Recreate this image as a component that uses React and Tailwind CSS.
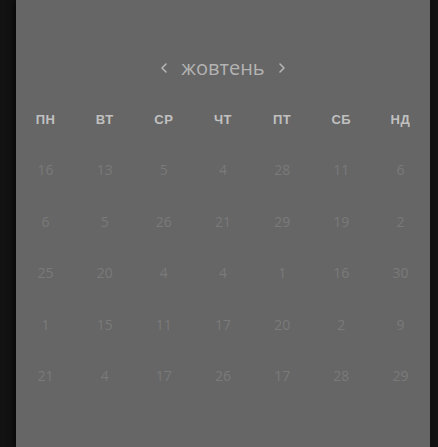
import React from 'react';

const days = ['пн', 'вт', 'ср', 'чт', 'пт', 'сб', 'нд'];

const weeks = [
  [16, 13, 5, 4, 28, 11, 6],
  [6, 5, 26, 21, 29, 19, 2],
  [25, 20, 4, 4, 1, 16, 30],
  [1, 15, 11, 17, 20, 2, 9],
  [21, 4, 17, 26, 17, 28, 29],
];

const Chevron = ({ dir }) => (
  <svg width="8" height="12" viewBox="0 0 8 12" className="text-[#b5b5b5]">
    <path
      d={dir === 'left' ? 'M6 2 L2 6 L6 10' : 'M2 2 L6 6 L2 10'}
      fill="none"
      stroke="currentColor"
      strokeWidth="1.6"
      strokeLinecap="round"
      strokeLinejoin="round"
    />
  </svg>
);

export default function App() {
  return (
    <div className="w-[438px] h-[447px] bg-[#121212] flex overflow-hidden">
      <div className="ml-[16px] w-[414px] h-full bg-[#666666] shadow-[-3px_0_5px_rgba(0,0,0,0.55)] pt-[56px] font-['Liberation_Sans',sans-serif]">
        {/* month header */}
        <div className="h-6 flex items-center justify-center gap-[13px]">
          <Chevron dir="left" />
          <span className="text-[20px] leading-6 text-[#b3b3b3] font-['Open_Sans',sans-serif]">жовтень</span>
          <Chevron dir="right" />
        </div>

        {/* weekdays */}
        <div className="grid grid-cols-7 mt-[32px] h-4">
          {days.map((d) => (
            <div key={d} className="text-center text-[13px] leading-4 font-bold uppercase tracking-[0.5px] text-[#c0c0c0]">
              {d}
            </div>
          ))}
        </div>

        {/* dates */}
        <div className="mt-[16px]">
          {weeks.map((w, i) => (
            <div key={i} className="grid grid-cols-7 h-[51.5px] items-center">
              {w.map((n, j) => (
                <div key={j} className="text-center text-[14px] text-[#7a7a7a] font-['Open_Sans',sans-serif]">
                  {n}
                </div>
              ))}
            </div>
          ))}
        </div>
      </div>
    </div>
  );
}
